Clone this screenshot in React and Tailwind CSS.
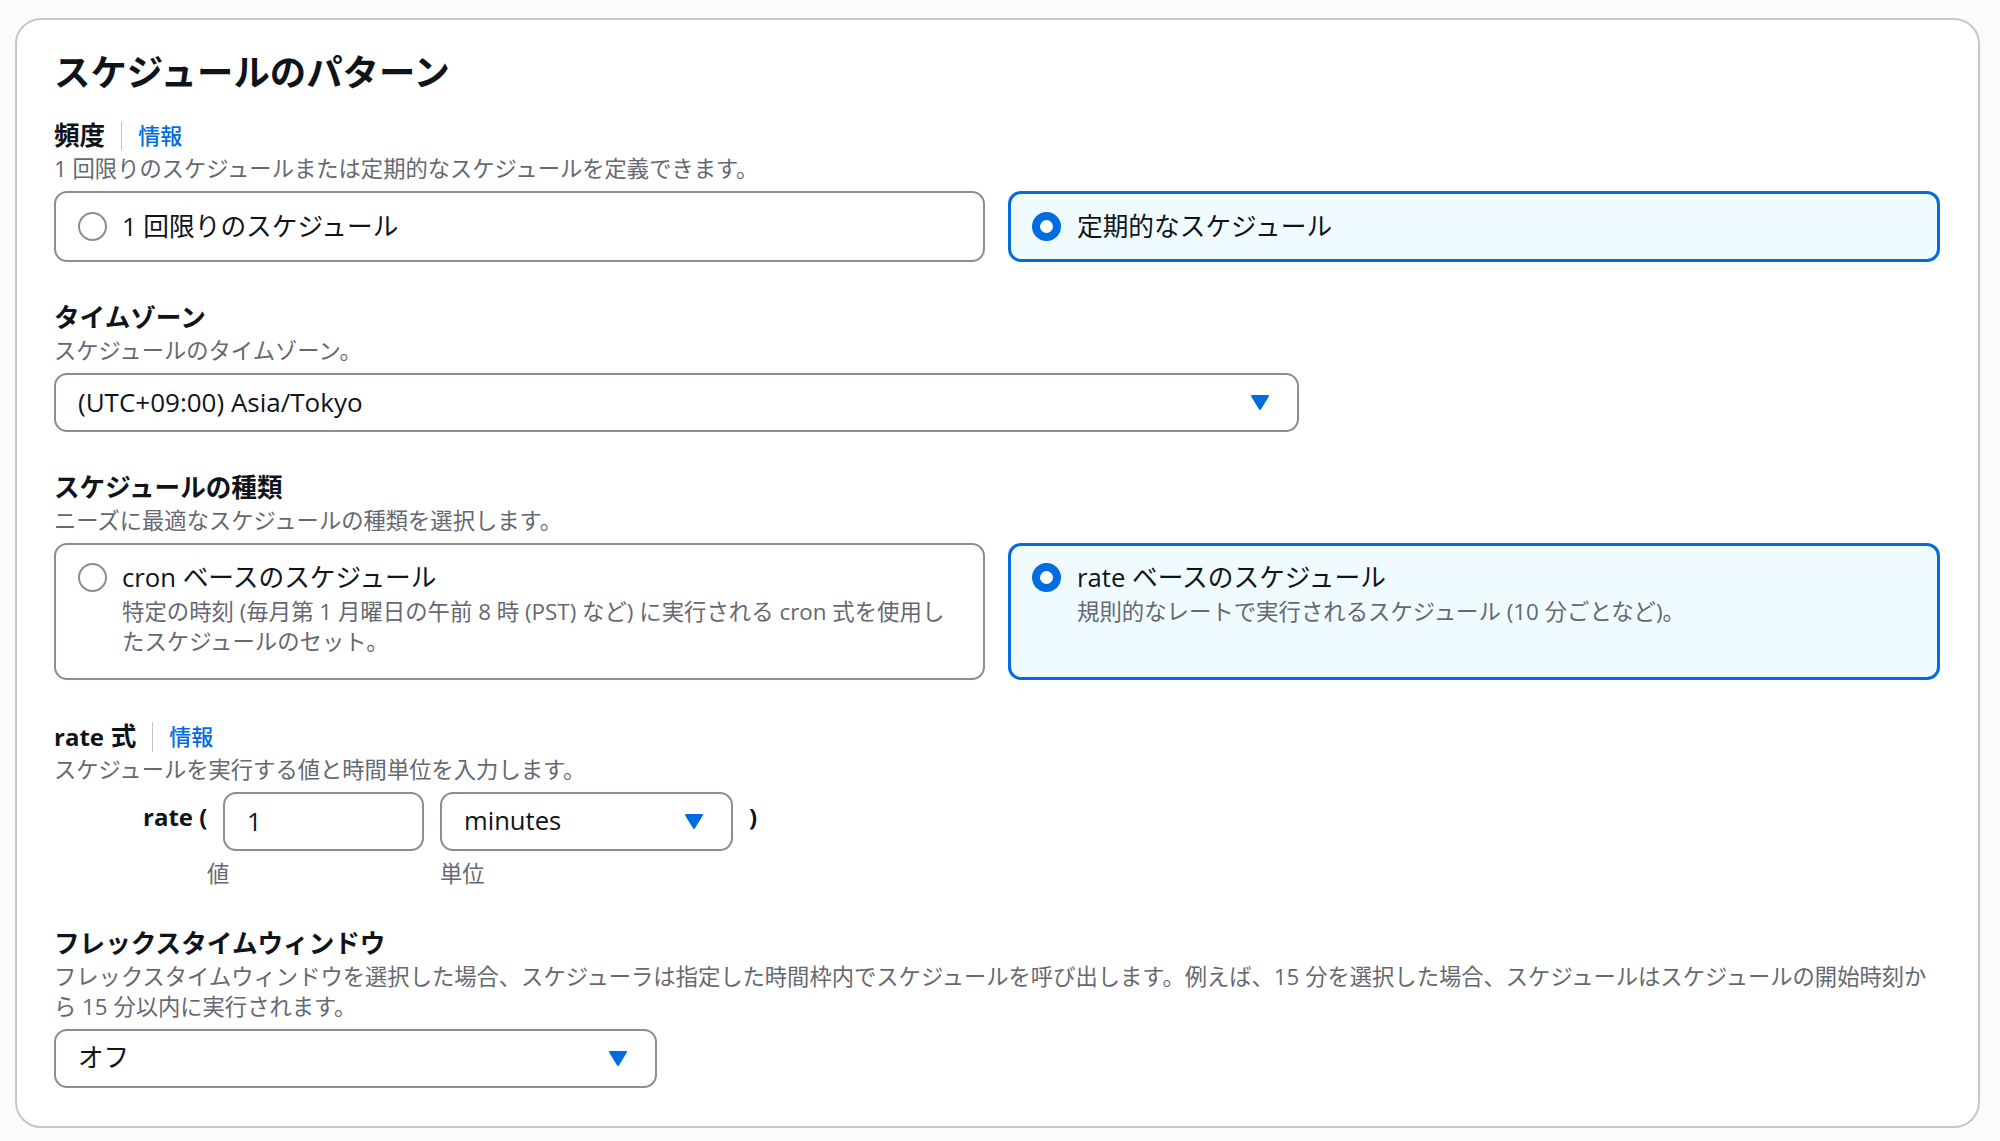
const fontStack = "font-['Open_Sans','Noto_Sans_CJK_JP',sans-serif]";

const Arrow = () => (
  <svg width="20" height="17" viewBox="0 0 20 17" className="shrink-0">
    <path d="M2 2 H18 L10 15 Z" fill="#006ce0" stroke="#006ce0" strokeWidth="2" strokeLinejoin="round" />
  </svg>
);

const Radio = ({ checked }) =>
  checked ? (
    <span className="block w-[29px] h-[29px] shrink-0 rounded-full border-[8.5px] border-[#006ce0] bg-white" />
  ) : (
    <span className="block w-[29px] h-[29px] shrink-0 rounded-full border-2 border-[#8c8c94] bg-white" />
  );

const Tile = ({ checked, label, desc, className }) => (
  <div
    className={`flex-1 flex rounded-[13px] pr-[30px] ${className} ${
      checked ? "gap-[16px] border-[3px] border-[#006ce0] bg-[#f0fbff] pl-[21px]" : "gap-[15px] border-2 border-[#8c8c94] bg-white pl-[22px]"
    }`}
  >
    <Radio checked={checked} />
    <div className="min-w-0">
      <div className="text-[25.7px] leading-[29px] text-[#0f141a]">{label}</div>
      {desc && <p className="mt-[5px] text-[22.4px] leading-[29.5px] text-[#656871]">{desc}</p>}
    </div>
  </div>
);

const Label = ({ children, info }) => (
  <div className="flex items-center h-[36px]">
    <span className="text-[25.6px] font-bold text-[#0f141a] leading-[36px]">{children}</span>
    {info && (
      <>
        <span className="mx-[16px] w-px h-[30px] bg-[#c6c6cd]" />
        <a href="#" className="text-[22px] font-medium text-[#006ce0] leading-[36px] -mt-[2px]">情報</a>
      </>
    )}
  </div>
);

const Desc = ({ children }) => (
  <p className="text-[22.3px] leading-[30px] text-[#656871]">{children}</p>
);

const Select = ({ value, className, textClass = "text-[25.6px]" }) => (
  <div className={`flex items-center justify-between h-[59px] border-2 border-[#8c8c94] rounded-[13px] bg-white pl-[22px] pr-[27px] ${className}`}>
    <span className={`${textClass} text-[#0f141a]`}>{value}</span>
    <Arrow />
  </div>
);

export default function App() {
  return (
    <div className={`min-h-[1141px] bg-[#fbfbfb] pt-[18px] px-[15px] ${fontStack}`}>
      <div className="w-[1965px] h-[1110px] border-2 border-[#c6c6cd] rounded-[26px] bg-white pl-[37px] pr-[38px] pt-[29px]">
        <h2 className="text-[36.4px] font-bold leading-[46px] text-[#0f141a]">スケジュールのパターン</h2>

        <div className="mt-[23px]">
          <Label info>頻度</Label>
          <Desc>1 回限りのスケジュールまたは定期的なスケジュールを定義できます。</Desc>
          <div className="flex gap-[23px] mt-[7px]">
            <Tile label="1 回限りのスケジュール" className="h-[71px] items-center" />
            <Tile checked label="定期的なスケジュール" className="h-[71px] items-center" />
          </div>
        </div>

        <div className="mt-[38px]">
          <Label>タイムゾーン</Label>
          <Desc>スケジュールのタイムゾーン。</Desc>
          <Select value="(UTC+09:00) Asia/Tokyo" textClass="text-[26px]" className="w-[1245px] mt-[7px]" />
        </div>

        <div className="mt-[38px]">
          <Label>スケジュールの種類</Label>
          <Desc>ニーズに最適なスケジュールの種類を選択します。</Desc>
          <div className="flex gap-[23px] mt-[7px]">
            <Tile
              label="cron ベースのスケジュール"
              desc="特定の時刻 (毎月第 1 月曜日の午前 8 時 (PST) など) に実行される cron 式を使用したスケジュールのセット。"
              className="h-[137px] pt-[18px]"
            />
            <Tile
              checked
              label="rate ベースのスケジュール"
              desc="規則的なレートで実行されるスケジュール (10 分ごとなど)。"
              className="h-[137px] pt-[17px]"
            />
          </div>
        </div>

        <div className="mt-[39px]">
          <Label info><span className="text-[24px]">rate</span> 式</Label>
          <Desc>スケジュールを実行する値と時間単位を入力します。</Desc>
          <div className="flex items-start mt-[7px] pl-[89px]">
            <span className="w-[80px] text-[24px] font-bold text-[#0f141a] leading-[50px]">rate (</span>
            <div className="w-[201px]">
              <div className="h-[59px] border-2 border-[#8c8c94] rounded-[13px] flex items-center pl-[22px] pt-[2px] text-[25.6px] text-[#0f141a]">1</div>
              <div className="mt-[5px] text-[22.3px] text-[#656871] leading-[36px] -ml-[16px]">値</div>
            </div>
            <div className="w-[293px] ml-[16px]">
              <Select value="minutes" />
              <div className="mt-[5px] text-[22.3px] text-[#656871] leading-[36px]">単位</div>
            </div>
            <span className="ml-[16px] text-[24px] font-bold text-[#0f141a] leading-[50px]">)</span>
          </div>
        </div>

        <div className="mt-[34px]">
          <Label>フレックスタイムウィンドウ</Label>
          <Desc>フレックスタイムウィンドウを選択した場合、スケジューラは指定した時間枠内でスケジュールを呼び出します。例えば、15 分を選択した場合、スケジュールはスケジュールの開始時刻から 15 分以内に実行されます。</Desc>
          <Select value="オフ" className="w-[603px] mt-[7px]" />
        </div>
      </div>
    </div>
  );
}
